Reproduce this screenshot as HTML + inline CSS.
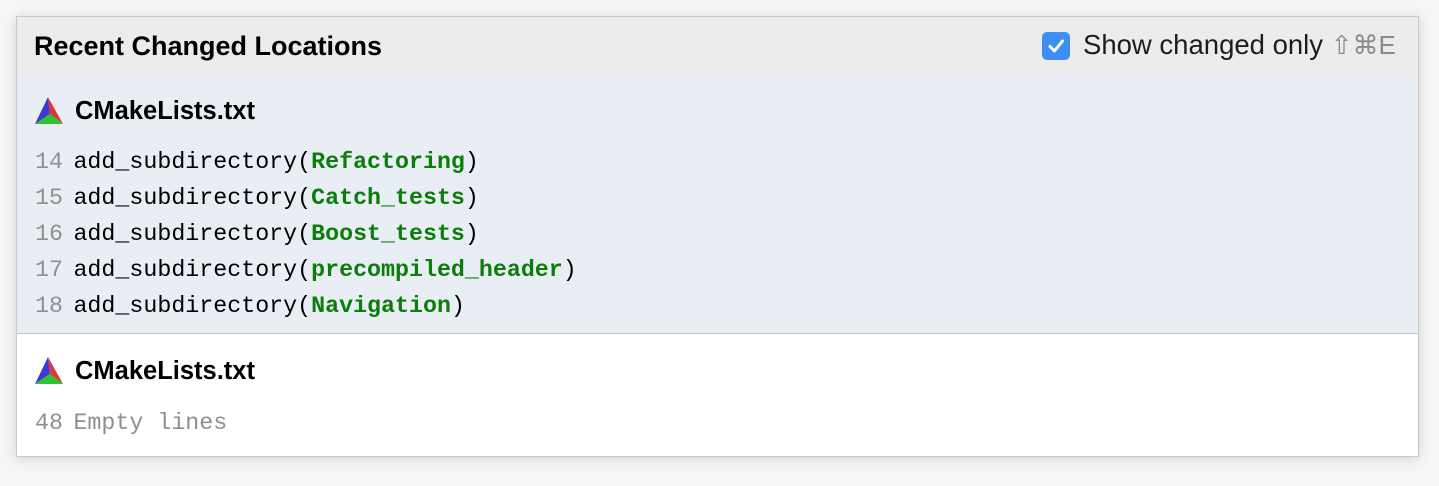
<!DOCTYPE html>
<html><head><style>
body{margin:0;width:1439px;height:486px;background:#f6f6f6;font-family:"Liberation Sans",sans-serif;position:relative;overflow:hidden}
.p{position:absolute;left:16px;top:16px;width:1401px;height:439px;background:#fff;border:1px solid #c9c9c9;box-shadow:0 2px 12px rgba(0,0,0,.15)}
.h{position:absolute;left:0;top:0;right:0;height:58px;background:#ececec}
.t{position:absolute;left:17px;top:14px;font-weight:bold;font-size:27px;color:#000}
.cb{position:absolute;left:1025px;top:15px;width:28px;height:28px;border-radius:5px;background:#3d8ff5}
.sc{position:absolute;left:1066px;top:12px;font-size:27.5px;color:#1d1d1d;white-space:nowrap}
.sc span{color:#8a8a8a;font-size:26px}
.s1{position:absolute;left:0;top:58px;right:0;height:258px;background:#e9edf4;border-bottom:1px solid #c4c4c4}
.f{position:absolute;left:58px;font-weight:bold;font-size:25.5px;color:#000}
.ic{position:absolute;left:17px}
.c{position:absolute;left:18px;font-family:"Liberation Mono",monospace;font-size:23.3px;color:#000;white-space:pre;line-height:36px}
.n{color:#8f8f8f}.g{color:#0a7d0a;font-weight:bold}
.sp{letter-spacing:-3.5px}
</style></head><body>
<div class="p">
<div class="h"><div class="t">Recent Changed Locations</div>
<div class="cb"><svg width="28" height="28"><path d="M8 14.5l4.5 4.5 8-10" stroke="#fff" stroke-width="3" fill="none" stroke-linecap="round" stroke-linejoin="round"/></svg></div>
<div class="sc">Show changed only <span>⇧⌘E</span></div></div>
<div class="s1">
<svg class="ic" style="top:21px" width="30" height="30" viewBox="0 0 30 30"><polygon points="14,1 1,28 16,18" fill="#3b3bd0"/><polygon points="14,1 16,18 29,28" fill="#d83a3a"/><polygon points="1,28 16,18 29,28" fill="#2ec42e"/></svg>
<div class="f" style="top:22px">CMakeLists.txt</div>
<div class="c" style="top:69px"><span class="n">14</span><span class="sp"> </span>add_subdirectory(<span class="g">Refactoring</span>)
<span class="n">15</span><span class="sp"> </span>add_subdirectory(<span class="g">Catch_tests</span>)
<span class="n">16</span><span class="sp"> </span>add_subdirectory(<span class="g">Boost_tests</span>)
<span class="n">17</span><span class="sp"> </span>add_subdirectory(<span class="g">precompiled_header</span>)
<span class="n">18</span><span class="sp"> </span>add_subdirectory(<span class="g">Navigation</span>)</div>
</div>
<svg class="ic" style="top:339px" width="30" height="30" viewBox="0 0 30 30"><polygon points="14,1 1,28 16,18" fill="#3b3bd0"/><polygon points="14,1 16,18 29,28" fill="#d83a3a"/><polygon points="1,28 16,18 29,28" fill="#2ec42e"/></svg>
<div class="f" style="top:340px">CMakeLists.txt</div>
<div class="c n" style="top:388px">48<span class="sp"> </span>Empty lines</div>
</div>
</body></html>
